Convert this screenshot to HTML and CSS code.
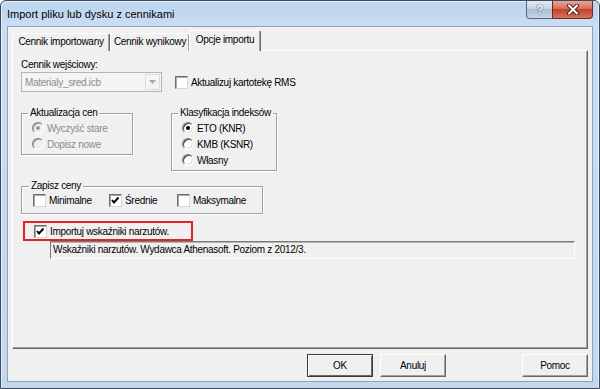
FILE: index.html
```html
<!DOCTYPE html>
<html lang="pl">
<head>
    <meta charset="UTF-8">
    <meta name="viewport" content="width=device-width, initial-scale=1.0">
    <title>Import pliku lub dysku z cennikami</title>
    <link rel="stylesheet" href="styles.css">
</head>
<body>
    <div class="window">
        <div class="titlebar">
            <span class="title">Import pliku lub dysku z cennikami</span>
            <div class="caption-btns">
                <span class="cap-help">?</span>
                <span class="cap-close">
                    <svg width="14" height="11" viewBox="0 0 14 11">
                        <path d="M3 1.5 L11 9.5 M11 1.5 L3 9.5" stroke="#5a2018" stroke-width="4" stroke-linecap="round"/>
                        <path d="M3 1.5 L11 9.5 M11 1.5 L3 9.5" stroke="#ffffff" stroke-width="2" stroke-linecap="round"/>
                    </svg>
                </span>
            </div>
        </div>

        <div class="client">
            <div class="tabs">
                <div class="tab tab-1">Cennik importowany</div>
                <div class="tab tab-2">Cennik wynikowy</div>
                <div class="tab tab-3 active">Opcje importu</div>
            </div>

            <div class="panel">
                <div class="field-label">Cennik wejściowy:</div>
                <div class="input-row">
                    <div class="combo">
                        <span class="combo-text">Materialy_sred.icb</span>
                        <span class="combo-btn">
                            <svg width="7" height="4" viewBox="0 0 7 4"><path d="M0 0 H7 L3.5 4 Z" fill="#a8a8a8"/></svg>
                        </span>
                    </div>
                    <div class="check rms">
                        <span class="box"></span>
                        <span>Aktualizuj kartotekę RMS</span>
                    </div>
                </div>

                <div class="groups">
                    <fieldset class="group group-update disabled">
                        <legend>Aktualizacja cen</legend>
                        <div class="radio"><span class="circle checked"></span>Wyczyść stare</div>
                        <div class="radio"><span class="circle"></span>Dopisz nowe</div>
                    </fieldset>
                    <fieldset class="group group-class">
                        <legend>Klasyfikacja indeksów</legend>
                        <div class="radio"><span class="circle checked"></span>ETO (KNR)</div>
                        <div class="radio"><span class="circle"></span>KMB (KSNR)</div>
                        <div class="radio"><span class="circle"></span>Własny</div>
                    </fieldset>
                </div>

                <fieldset class="group group-save">
                    <legend>Zapisz ceny</legend>
                    <div class="save-row">
                        <div class="check opt-min"><span class="box"></span><span>Minimalne</span></div>
                        <div class="check opt-avg">
                            <span class="box">
                                <svg width="11" height="11" viewBox="0 0 11 11"><polyline points="2,5 4,7.5 8.5,2.5" fill="none" stroke="#000" stroke-width="2"/></svg>
                            </span>
                            <span>Średnie</span>
                        </div>
                        <div class="check opt-max"><span class="box"></span><span>Maksymalne</span></div>
                    </div>
                </fieldset>

                <div class="highlight">
                    <div class="check">
                        <span class="box">
                            <svg width="11" height="11" viewBox="0 0 11 11"><polyline points="2,5 4,7.5 8.5,2.5" fill="none" stroke="#000" stroke-width="2"/></svg>
                        </span>
                        <span>Importuj wskaźniki narzutów.</span>
                    </div>
                </div>
                <div class="info">Wskaźniki narzutów. Wydawca Athenasoft. Poziom z 2012/3.</div>
            </div>

            <div class="buttons">
                <button type="button" class="btn default">OK</button>
                <button type="button" class="btn">Anuluj</button>
                <button type="button" class="btn help">Pomoc</button>
            </div>
        </div>
    </div>
</body>
</html>
```

FILE: styles.css
```css
:root {
    --face: #f0f0f0;
    --shadow: #a0a0a0;
    --dark-shadow: #696969;
    --light: #ffffff;
    --disabled-text: #8d8d8d;
}

* {
    box-sizing: border-box;
}

body {
    margin: 0;
    font-family: 'Liberation Sans', Arial, sans-serif;
    font-size: 10px;
    letter-spacing: -0.3px;
    color: #000;
    background: #fff;
}

.window {
    width: 600px;
    height: 389px;
    display: flex;
    flex-direction: column;
    padding: 0 6px 6px;
    border: 1px solid #3c4c5e;
    border-radius: 6px 6px 0 0;
    background: linear-gradient(to bottom, #bcd4ee 0, #c9ddf3 25px, #c3d8ef 100%);
    box-shadow: inset 1px 1px 0 #e4eefa, inset -1px 0 0 #e4eefa;
}

/* title bar */

.titlebar {
    height: 25px;
    display: flex;
    align-items: flex-start;
    flex-shrink: 0;
}

.title {
    padding-top: 5px;
    line-height: 16px;
    font-size: 11px;
    letter-spacing: 0;
    color: #000;
}

.caption-btns {
    display: flex;
    margin-left: auto;
}

.cap-help,
.cap-close {
    height: 18px;
    display: flex;
    align-items: center;
    justify-content: center;
    border: 1px solid #55677c;
    border-top: none;
}

.cap-help {
    width: 26px;
    border-right: none;
    border-radius: 0 0 0 4px;
    background: linear-gradient(to bottom, #e2eaf4 0, #c5d3e3 45%, #aabdd3 50%, #c7d6e6 100%);
    color: #f4f7fb;
    font-size: 13px;
    font-weight: bold;
    text-shadow: 0 0 1px #3e4f63, 0 0 1px #3e4f63;
}

.cap-close {
    width: 41px;
    border-color: #6c2a20;
    border-radius: 0 0 4px 0;
    background: linear-gradient(to bottom, #e7a797 0, #d66e59 45%, #c4412a 50%, #d5735d 100%);
}

/* client area */

.client {
    flex: 1;
    display: flex;
    flex-direction: column;
    padding: 4px 4px 4px;
    background: var(--face);
    border: 1px solid #8ca2ba;
}

.tabs {
    height: 20px;
    display: flex;
    align-items: flex-end;
    position: relative;
    z-index: 1;
    margin-bottom: -1px;
}

.tab {
    height: 18px;
    line-height: 16px;
    text-align: center;
    background: var(--face);
    border-top: 1px solid var(--light);
    border-left: 1px solid var(--light);
    border-right: 1px solid var(--dark-shadow);
    border-radius: 2px 2px 0 0;
    box-shadow: inset -1px 0 0 var(--shadow);
}

.tab-1 {
    width: 98px;
}

.tab-2 {
    width: 80px;
}

.tab-3 {
    width: 72px;
}

.tab.active {
    height: 21px;
    line-height: 18px;
    margin-left: -1px;
    padding-bottom: 1px;
}

.panel {
    flex: 1;
    padding: 0 0 0 8px;
    border: 1px solid var(--light);
    border-right-color: var(--dark-shadow);
    border-bottom-color: var(--dark-shadow);
    box-shadow: inset -1px -1px 0 var(--shadow);
}

.field-label {
    margin-top: 7px;
    line-height: 14px;
}

.input-row {
    display: flex;
    align-items: center;
    margin-top: 0;
}

.combo {
    width: 141px;
    height: 20px;
    display: flex;
    align-items: center;
    border: 1px solid #b5b5b5;
    background: #f4f4f4;
}

.combo-text {
    flex: 1;
    padding-left: 3px;
    color: var(--disabled-text);
}

.combo-btn {
    width: 15px;
    height: 16px;
    margin-right: 1px;
    display: flex;
    align-items: center;
    justify-content: center;
    border: 1px solid #dcdcdc;
    background: #f4f4f4;
}

.check {
    display: flex;
    align-items: center;
}

.box {
    width: 13px;
    height: 13px;
    margin-right: 3px;
    display: flex;
    align-items: center;
    justify-content: center;
    background: #fff;
    border: 1px solid;
    border-color: #6f6f6f #d6d6d6 #d6d6d6 #6f6f6f;
    box-shadow: inset 1px 1px 0 #a8a8a8;
}

.rms {
    margin-left: 13px;
}

/* group boxes */

.groups {
    display: flex;
    align-items: flex-start;
    margin-top: 14px;
}

.group {
    margin: 0;
    min-width: 0;
    padding: 0 0 2px 10px;
    border: 1px solid var(--shadow);
    box-shadow: 1px 1px 0 var(--light), inset 1px 1px 0 var(--light);
}

.group legend {
    padding: 0 2px;
    margin-left: -4px;
    line-height: 14px;
}

.group-update {
    width: 112px;
}

.group-class {
    width: 106px;
    margin-left: 38px;
}

.radio {
    height: 16px;
    display: flex;
    align-items: center;
}

.circle {
    width: 12px;
    height: 12px;
    margin-right: 3px;
    position: relative;
    border-radius: 50%;
    border: 1px solid;
    border-color: #808080 #ffffff #ffffff #808080;
    box-shadow: inset 1px 1px 0 #404040, inset -1px -1px 0 #dcdcdc;
    background: #fff;
}

.circle.checked::after {
    content: "";
    position: absolute;
    left: 3px;
    top: 3px;
    width: 4px;
    height: 4px;
    border-radius: 50%;
    background: #000;
}

.disabled {
    color: var(--disabled-text);
}

.disabled legend {
    color: #000;
}

.disabled .circle {
    background: var(--face);
    box-shadow: inset 1px 1px 0 #a8a8a8;
}

.disabled .circle.checked::after {
    background: #9a9a9a;
}

.group-save {
    width: 242px;
    margin-top: 8px;
    padding: 0 0 6px 11px;
}

.save-row {
    display: flex;
    height: 14px;
    align-items: center;
}

.opt-min {
    width: 76px;
}

.opt-avg {
    width: 68px;
}

.highlight {
    width: 170px;
    height: 20px;
    margin: 7px 0 0 2px;
    padding-left: 9px;
    display: flex;
    align-items: center;
    border: 2px solid #e3202b;
}

.info {
    width: 525px;
    height: 18px;
    margin-left: 29px;
    padding-left: 2px;
    line-height: 16px;
    background: var(--face);
    border: 1px solid;
    border-color: #7a7a7a #ffffff #ffffff #7a7a7a;
    box-shadow: 0 0 0 0 transparent, inset 0 1px 0 #b4b4b4;
}

/* dialog buttons */

.buttons {
    height: 23px;
    margin-top: 5px;
    display: flex;
    justify-content: flex-end;
}

.btn {
    width: 66px;
    height: 23px;
    padding: 0;
    font-family: inherit;
    font-size: 10px;
    letter-spacing: -0.3px;
    color: #000;
    background: var(--face);
    border: 1px solid;
    border-color: var(--light) var(--dark-shadow) var(--dark-shadow) var(--light);
    box-shadow: inset -1px -1px 0 var(--shadow);
}

.btn + .btn {
    margin-left: 7px;
}

.btn.default {
    border-color: #3a3a3a;
    box-shadow: inset 1px 1px 0 var(--light), inset -1px -1px 0 var(--dark-shadow);
}

.btn.help {
    margin-left: 76px;
}
```
